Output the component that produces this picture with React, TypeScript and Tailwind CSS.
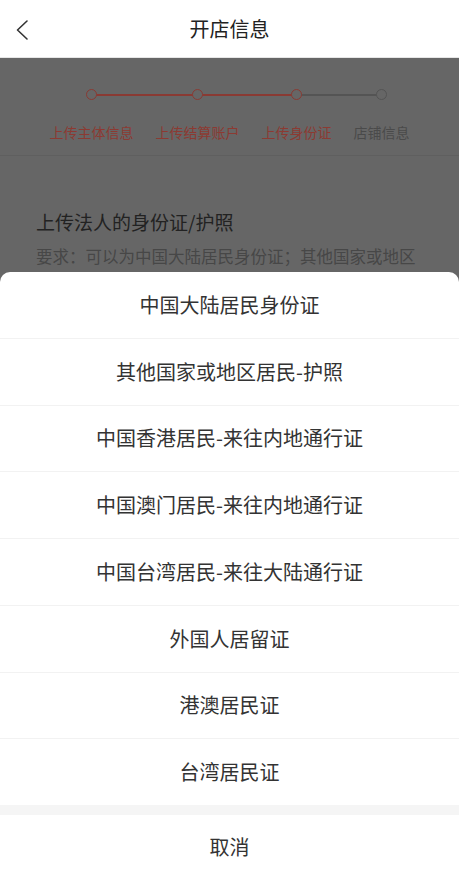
import React from 'react';

const steps = [
  { label: '上传主体信息', done: true, line: 'w-[106px] bg-[#8a3a33]' },
  { label: '上传结算账户', done: true, line: 'w-[99px] bg-[#8a3a33]' },
  { label: '上传身份证', done: true, line: 'w-[85px] bg-[#545454]' },
  { label: '店铺信息', done: false, line: '' },
];

const options = [
  '中国大陆居民身份证',
  '其他国家或地区居民-护照',
  '中国香港居民-来往内地通行证',
  '中国澳门居民-来往内地通行证',
  '中国台湾居民-来往大陆通行证',
  '外国人居留证',
  '港澳居民证',
  '台湾居民证',
];

export default function App() {
  return (
    <div
      className="relative w-[459px] h-[876px] overflow-hidden bg-white"
      style={{ fontFamily: '"Noto Sans CJK SC", "Noto Sans", sans-serif' }}
    >
      {/* Header */}
      <header className="relative h-[58px] flex items-center justify-center border-b border-[#e6e6e6]">
        <button className="absolute left-[10px] top-[16px] w-[24px] h-[28px] flex items-center justify-center">
          <svg width="14" height="22" viewBox="0 0 14 22" fill="none">
            <path d="M12 2 L2.5 11 L12 20" stroke="#333" strokeWidth="1.6" strokeLinecap="round" strokeLinejoin="round" />
          </svg>
        </button>
        <h1 className="text-[20px] text-[#222] leading-none">开店信息</h1>
      </header>

      {/* Masked page content */}
      <div className="bg-[#666666] h-[818px]">
        <div className="h-[98px] border-b border-[#5f5f5f] flex justify-center gap-[22px] pt-[31px]">
          {steps.map((s, i) => (
            <div key={i} className="relative flex flex-col items-center">
              <div className="relative h-[11px] w-full flex justify-center">
                {s.line && (
                  <div className={`absolute top-[5px] left-1/2 h-[1.5px] ${s.line}`} />
                )}
                <div
                  className={`relative w-[11px] h-[11px] rounded-full border-[1.5px] bg-[#666666] ${
                    s.done ? 'border-[#8a3a33]' : 'border-[#545454]'
                  }`}
                />
              </div>
              <span
                className={`mt-[22px] text-[14px] leading-[20px] whitespace-nowrap ${
                  s.done ? 'text-[#8c3a32]' : 'text-[#4a4a4a]'
                }`}
              >
                {s.label}
              </span>
            </div>
          ))}
        </div>

        <div className="px-[36px] pt-[52px]">
          <h2 className="text-[19px] leading-[28px] text-[#222]">上传法人的身份证/护照</h2>
          <p className="mt-[7px] text-[16.5px] leading-[26px] text-[#474747] whitespace-nowrap">
            要求：可以为中国大陆居民身份证；其他国家或地区
          </p>
        </div>
      </div>

      {/* Action sheet */}
      <div className="absolute left-0 right-0 top-[272px] bg-white rounded-t-[10px] overflow-hidden">
        {options.map((o, i) => (
          <div
            key={i}
            className={`h-[65.75px] flex items-center justify-center text-[20px] text-[#333] ${
              i < options.length - 1 ? 'border-b border-[#f2f2f2] box-content' : ''
            }`}
          >
            {o}
          </div>
        ))}
        <div className="h-[10px] bg-[#f5f5f5]" />
        <div className="h-[64px] flex items-center justify-center text-[20px] text-[#333]">取消</div>
      </div>
    </div>
  );
}
